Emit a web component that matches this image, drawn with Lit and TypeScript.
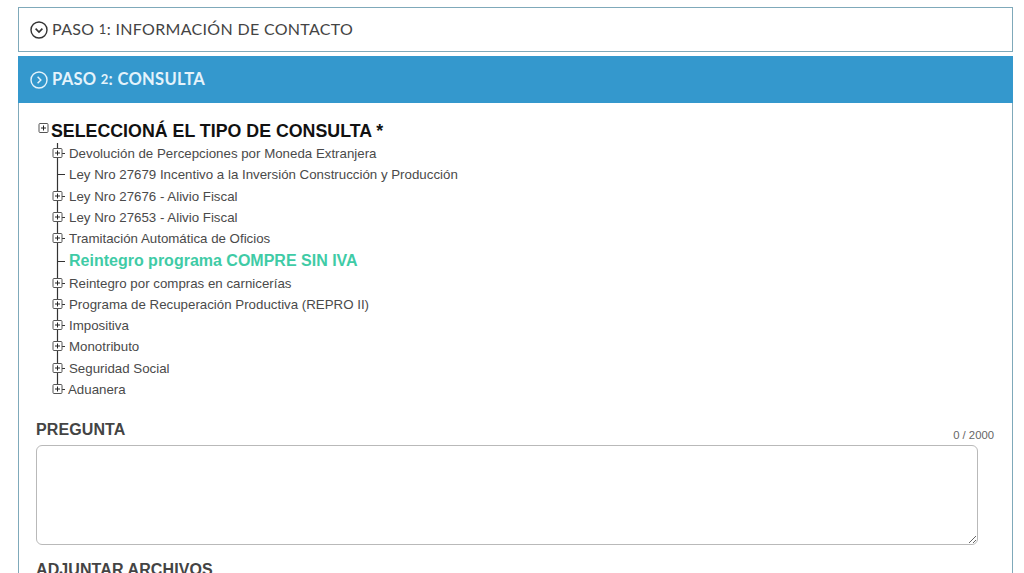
import { LitElement, html, css, svg } from "lit";
import { customElement } from "lit/decorators.js";

const ROWS: { t: string; leaf?: boolean; hi?: boolean; last?: boolean; h: number }[] = [
  { t: "Devolución de Percepciones por Moneda Extranjera", h: 21 },
  { t: "Ley Nro 27679 Incentivo a la Inversión Construcción y Producción", leaf: true, h: 21 },
  { t: "Ley Nro 27676 - Alivio Fiscal", h: 22 },
  { t: "Ley Nro 27653 - Alivio Fiscal", h: 21 },
  { t: "Tramitación Automática de Oficios", h: 21 },
  { t: "Reintegro programa COMPRE SIN IVA", leaf: true, hi: true, h: 24 },
  { t: "Reintegro por compras en carnicerías", h: 21 },
  { t: "Programa de Recuperación Productiva (REPRO II)", h: 21 },
  { t: "Impositiva", h: 21 },
  { t: "Monotributo", h: 21 },
  { t: "Seguridad Social", h: 22 },
  { t: "Aduanera", last: true, h: 21 },
];

const plus = (cx: number, cy: number) => svg`
  <rect x="${cx - 4}" y="${cy - 4}" width="9" height="9" rx="1" fill="#fff" stroke="#555" stroke-width="1"/>
  <path d="M${cx - 2} ${cy + 0.5}h5M${cx + 0.5} ${cy - 2}v5" stroke="#222" stroke-width="1" fill="none"/>`;

@customElement("app-root")
export class AppRoot extends LitElement {
  static styles = css`
    :host { display: block; height: 573px; overflow: hidden; background: #fff; font-family: "Liberation Sans", Arial, sans-serif; }
    .page { padding: 7px 11px 0 18px; }
    .head { display: flex; align-items: center; gap: 4px; box-sizing: border-box; font-family: Lato, sans-serif; }
    .head span { position: relative; top: -1px; }
    .head svg { flex: none; }
    .num { font-size: 13px; }
    .p1 { height: 45px; border: 1px solid #7fa9ba; padding-left: 11px; color: #444; margin-bottom: 4px; font-size: 16px; letter-spacing: 0.32px; }
    .p2 { height: 47px; background: #3498cd; padding-left: 12px; color: #e4f3fb; font-weight: 700; font-size: 16.5px; letter-spacing: 0.3px; }
    .body { border: solid #7fa9ba; border-width: 0 1px; padding: 18px 17px 0 17px; height: 470px; box-sizing: border-box; }
    .root { display: flex; align-items: center; height: 21px; }
    .root svg { flex: none; }
    .root b { font-size: 17.8px; color: #111; margin-left: -1px; }
    .rows { margin: 1px 0 0 13px; }
    .row { display: flex; align-items: center; font-size: 13.3px; color: #4a4a4a; }
    .row svg { flex: none; }
    .hi { font-size: 16px; font-weight: 700; color: #3fcba6; }
    .lab { font-weight: 700; font-size: 16px; color: #444; letter-spacing: 0.1px; }
    .q { display: flex; justify-content: space-between; align-items: flex-end; margin-top: 18px; height: 24px; padding-right: 1px; }
    .q .lab { margin-bottom: 3px; }
    .count { font-size: 11.3px; color: #666; margin-bottom: 1px; }
    textarea { display: block; box-sizing: border-box; width: 942px; height: 100px; margin-top: 3px; border: 1px solid #b9b9b9; border-radius: 6px; background: #fff; outline: none; }
    .attach { margin-top: 16px; }
  `;

  render() {
    return html`<div class="page">
      <div class="head p1">
        <svg width="18" height="18" viewBox="0 0 18 18" fill="none" stroke="#333" stroke-width="1.4"><circle cx="9" cy="9" r="8"/><path d="M5.6 7.6 9 11l3.4-3.4" stroke-width="1.6"/></svg>
        <span>PASO <span class="num">1</span>: INFORMACIÓN DE CONTACTO</span>
      </div>
      <div class="head p2">
        <svg width="18" height="18" viewBox="0 0 18 18" fill="none" stroke="#e4f3fb" stroke-width="1.4"><circle cx="9" cy="9" r="8"/><path d="M7.6 5.8 10.8 9l-3.2 3.2" stroke-width="1.5"/></svg>
        <span>PASO <span class="num">2</span>: CONSULTA</span>
      </div>
      <div class="body">
        <div class="root">
          <svg width="16" height="21" viewBox="0 0 16 21">${plus(7, 6.5)}</svg>
          <b>SELECCIONÁ EL TIPO DE CONSULTA *</b>
        </div>
        <div class="rows">
          ${ROWS.map((r) => html`<div class="row" style="height:${r.h}px">
            <svg width="${r.last ? 19 : 20}" height="${r.h}" viewBox="0 0 ${r.last ? 19 : 20} ${r.h}">
              ${svg`<path d="M8.5 0V${r.last ? Math.floor(r.h / 2) : r.h}M8.5 ${Math.floor(r.h / 2) + 0.5}H16" stroke="#333" stroke-width="1.2" fill="none"/>`}
              ${r.leaf ? "" : plus(8, Math.floor(r.h / 2) - 0.5)}
            </svg>
            <span class="${r.hi ? "hi" : ""}">${r.t}</span>
          </div>`)}
        </div>
        <div class="q"><span class="lab">PREGUNTA</span><span class="count">0 / 2000</span></div>
        <textarea></textarea>
        <div class="lab attach">ADJUNTAR ARCHIVOS</div>
      </div>
    </div>`;
  }
}
